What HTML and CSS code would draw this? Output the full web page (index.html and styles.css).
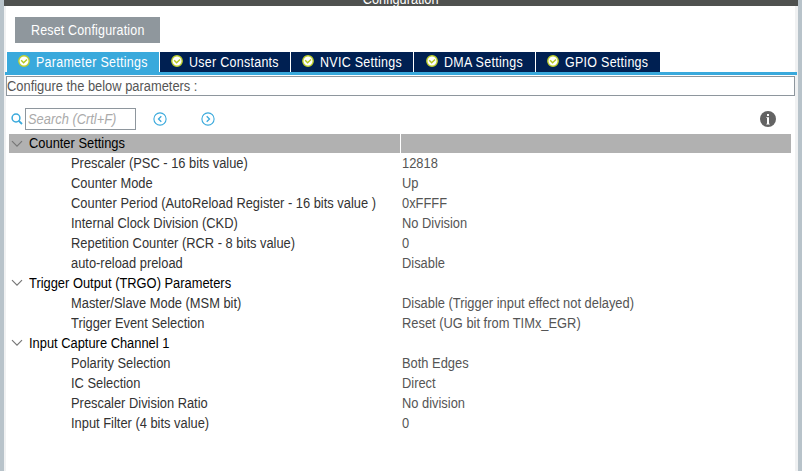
FILE: index.html
```html
<!DOCTYPE html>
<html lang="en">
<head>
<meta charset="utf-8">
<title>Configuration</title>
<link rel="stylesheet" href="styles.css">
</head>
<body>
<svg class="defs" width="0" height="0">
  <symbol id="check" viewBox="0 0 12 12"><circle cx="6" cy="6" r="5.2" fill="#fff" stroke="#bfd02c" stroke-width="1.4"/><path d="M3.2 5.2 5.6 7.8 9 4.4" fill="none" stroke="#b5c81e" stroke-width="1.4"/></symbol>
  <symbol id="chevron" viewBox="0 0 12 8"><path d="M1 1.2 6 6.2 11 1.2" fill="none" stroke="#777" stroke-width="1.2"/></symbol>
</svg>
<div class="window">
  <header class="titlebar"><span>Configuration</span></header>
  <button class="reset"><span>Reset Configuration</span></button>
  <nav class="tabs">
    <div class="tab active param"><svg><use href="#check"/></svg><span>Parameter Settings</span></div>
    <div class="tab user"><svg><use href="#check"/></svg><span>User Constants</span></div>
    <div class="tab nvic"><svg><use href="#check"/></svg><span>NVIC Settings</span></div>
    <div class="tab dma"><svg><use href="#check"/></svg><span>DMA Settings</span></div>
    <div class="tab gpio"><svg><use href="#check"/></svg><span>GPIO Settings</span></div>
  </nav>
  <div class="hint"><span>Configure the below parameters :</span></div>
  <div class="toolbar">
    <svg class="mag" viewBox="0 0 12 12"><circle cx="5" cy="5" r="3.9" fill="none" stroke="#39a9dc" stroke-width="1.5"/><path d="M7.8 7.8 11 11" stroke="#39a9dc" stroke-width="1.8"/></svg>
    <div class="search"><span>Search (Crtl+F)</span></div>
    <svg class="prev" viewBox="0 0 14 14"><circle cx="7" cy="7" r="6.1" fill="none" stroke="#39a9dc" stroke-width="1.1"/><path d="M8.3 4.2 5.5 7 8.3 9.8" fill="none" stroke="#39a9dc" stroke-width="1.3"/></svg>
    <svg class="next" viewBox="0 0 14 14"><circle cx="7" cy="7" r="6.1" fill="none" stroke="#39a9dc" stroke-width="1.1"/><path d="M5.7 4.2 8.5 7 5.7 9.8" fill="none" stroke="#39a9dc" stroke-width="1.3"/></svg>
    <svg class="info" viewBox="0 0 16 16"><circle cx="8" cy="8" r="8" fill="#636363"/><path d="M7 3h2v2H7zM6.3 6.2H9v6.6h.8v.7H6.3v-.7H7V7h-.7z" fill="#fff"/></svg>
  </div>
  <div class="table">
    <div class="row group selected"><div class="name"><svg><use href="#chevron"/></svg><span>Counter Settings</span></div><div class="value"></div></div>
    <div class="row"><div class="name"><span>Prescaler (PSC - 16 bits value)</span></div><div class="value"><span>12818</span></div></div>
    <div class="row"><div class="name"><span>Counter Mode</span></div><div class="value"><span>Up</span></div></div>
    <div class="row"><div class="name"><span>Counter Period (AutoReload Register - 16 bits value )</span></div><div class="value"><span>0xFFFF</span></div></div>
    <div class="row"><div class="name"><span>Internal Clock Division (CKD)</span></div><div class="value"><span>No Division</span></div></div>
    <div class="row"><div class="name"><span>Repetition Counter (RCR - 8 bits value)</span></div><div class="value"><span>0</span></div></div>
    <div class="row"><div class="name"><span>auto-reload preload</span></div><div class="value"><span>Disable</span></div></div>
    <div class="row group"><div class="name"><svg><use href="#chevron"/></svg><span>Trigger Output (TRGO) Parameters</span></div></div>
    <div class="row"><div class="name"><span>Master/Slave Mode (MSM bit)</span></div><div class="value"><span>Disable (Trigger input effect not delayed)</span></div></div>
    <div class="row"><div class="name"><span>Trigger Event Selection</span></div><div class="value"><span>Reset (UG bit from TIMx_EGR)</span></div></div>
    <div class="row group"><div class="name"><svg><use href="#chevron"/></svg><span>Input Capture Channel 1</span></div></div>
    <div class="row"><div class="name"><span>Polarity Selection</span></div><div class="value"><span>Both Edges</span></div></div>
    <div class="row"><div class="name"><span>IC Selection</span></div><div class="value"><span>Direct</span></div></div>
    <div class="row"><div class="name"><span>Prescaler Division Ratio</span></div><div class="value"><span>No division</span></div></div>
    <div class="row"><div class="name"><span>Input Filter (4 bits value)</span></div><div class="value"><span>0</span></div></div>
  </div>
</div>
</body>
</html>
```
FILE: styles.css
```css
* { box-sizing: border-box; }
body { margin: 0; background: #fff; font: 14px/20px "Liberation Sans", Arial, sans-serif; }
.defs { position: absolute; }
svg { flex: none; display: block; }
span { display: inline-block; white-space: nowrap; transform: scaleX(0.92); transform-origin: 0 50%; }
.window {
  width: 802px; height: 471px; overflow: hidden;
  display: flex; flex-direction: column;
  border: solid #b8c3ca; border-width: 0 4px;
  background: linear-gradient(90deg, #f0f1f2 0 2px, #fff 2px 791px, #f0f1f2 791px);
}
.titlebar { flex: none; height: 6px; background: #4f514f; color: #fff; display: flex; align-items: flex-end; justify-content: center; line-height: 14px; }
.titlebar span { margin-bottom: 0; transform: scaleX(0.91); transform-origin: 50% 50%; }
.reset {
  flex: none; width: 145px; height: 26px; margin: 11px 0 9px 11px; padding: 0 0 0 16px; border: 0;
  background: #8f979d; color: #fff; text-align: left; white-space: nowrap;
  font: 14px/27px "Liberation Sans", Arial, sans-serif;
}
.reset span { transform: scaleX(0.89); letter-spacing: 0.2px; }
.tabs { flex: none; display: flex; gap: 1px; height: 23px; margin: 0 1px; padding-left: 2px; border-bottom: 3px solid #39a9dc; }
.tab { display: flex; align-items: center; gap: 6px; padding-left: 11px; height: 20px; background: #002052; color: #fff; white-space: nowrap; }
.tab span { transform: scaleX(0.89); letter-spacing: 0.32px; }
.tab svg { width: 12px; height: 12px; margin-top: -2px; }
.tab.active { background: #39a9dc; }
.param { width: 152px; } .user { width: 130px; } .nvic { width: 122px; } .dma { width: 121px; } .gpio { width: 124px; }
.tab.dma { padding-left: 12px; }
.hint { flex: none; height: 20px; margin: 1px 3px 0 2px; border: 1px solid #8e969d; color: #555; line-height: 19px; }
.toolbar { flex: none; height: 22px; margin: 12px 0 4px 7px; display: flex; align-items: center; }
.mag { width: 12px; height: 12px; margin-right: 2px; }
.search { width: 111px; height: 22px; border: 1px solid #8e969d; padding-left: 2px; color: #aaa; font-style: italic; line-height: 21px; }
.prev, .next { width: 14px; height: 14px; }
.prev { margin-left: 17px; }
.next { margin-left: 34px; }
.info { width: 16px; height: 16px; margin-left: 545px; }
.table { width: 782px; margin-left: 5px; }
.row { display: grid; grid-template-columns: 391px 390px; gap: 1px; height: 20px; line-height: 18px; white-space: nowrap; }
.name { padding-left: 62px; color: #333; }
.value { padding-left: 1px; color: #555; }
.group .name { display: flex; align-items: center; gap: 6px; height: 18px; padding-left: 2px; color: #000; }
.group svg { width: 12px; height: 8px; }
.selected { height: 19px; line-height: 19px; margin-bottom: 1px; }
.selected .name { height: 19px; }
.selected > div { background: #b1b1b1; }
```
